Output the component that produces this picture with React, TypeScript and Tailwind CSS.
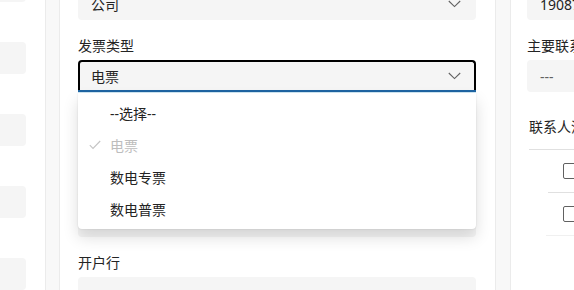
import React from 'react';

function Chevron() {
  return (
    <svg width="13" height="8" viewBox="0 0 13 8" className="shrink-0">
      <path d="M0.8 1 L6.5 6.6 L12.2 1" fill="none" stroke="#616161" strokeWidth="1.1" />
    </svg>
  );
}

function Check() {
  return (
    <svg width="12" height="10" viewBox="0 0 12 10">
      <path d="M0.8 5.2 L4 8.4 L11.2 1" fill="none" stroke="#c4c4c4" strokeWidth="1.1" />
    </svg>
  );
}

function Field({ label, children }: { label: string; children: React.ReactNode }) {
  return (
    <div className="flex flex-col">
      <div className="h-[20px] leading-[20px] text-[14px] text-[#242424]">{label}</div>
      <div className="mt-[4px]">{children}</div>
    </div>
  );
}

function Box({ text, chevron, muted }: { text?: string; chevron?: boolean; muted?: boolean }) {
  return (
    <div className="h-[32px] rounded-[4px] bg-[#f5f5f5] flex items-center justify-between pl-[13px] pr-[15px]">
      <span className={muted ? 'text-[#616161] text-[14px]' : 'text-[#242424] text-[14px]'}>{text}</span>
      {chevron && <Chevron />}
    </div>
  );
}

const options = [
  { label: '--选择--', disabled: false, checked: false },
  { label: '电票', disabled: true, checked: true },
  { label: '数电专票', disabled: false, checked: false },
  { label: '数电普票', disabled: false, checked: false },
];

export default function App() {
  return (
    <div
      className="w-[574px] h-[290px] overflow-hidden bg-white flex"
      style={{ fontFamily: '"Noto Sans", "Noto Sans CJK SC", sans-serif' }}
    >
      {/* left panel (cut off) */}
      <div className="w-[45px] shrink-0 overflow-hidden flex justify-end pr-[19px]">
        <div className="w-[200px] shrink-0 -mt-[12px] flex flex-col gap-[16px]">
          <Box chevron />
          <Field label="">
            <Box />
          </Field>
          <Field label="">
            <Box />
          </Field>
          <Field label="">
            <Box />
          </Field>
          <Field label="">
            <Box />
          </Field>
        </div>
      </div>

      <div className="w-[15px] shrink-0 bg-[#f8f8f8] border-x border-[#ebebeb]" />

      {/* middle panel */}
      <div className="w-[435px] shrink-0 pl-[18px] pr-[19px]">
        <div className="-mt-[12px] flex flex-col gap-[16px]">
          <Box text="公司" chevron />
          <Field label="发票类型">
            <div className="relative">
              <div className="h-[32px] rounded-t-[4px] bg-[#f5f5f5] border-2 border-black border-b-0 flex flex-col">
                <div className="flex-1 flex items-center justify-between pl-[11px] pr-[13px]">
                  <span className="text-[14px] text-[#242424]">电票</span>
                  <Chevron />
                </div>
                <div className="h-[2px] -mx-[2px] bg-[#1f65a3]" />
              </div>
              <div className="h-[1px] bg-[#d6eefa]" />
              <div className="absolute left-0 right-0 top-[33px] z-10 bg-white rounded-b-[4px] py-[4px] shadow-[0_0_2px_rgba(0,0,0,0.12),0_8px_16px_rgba(0,0,0,0.14)]">
                {options.map((o) => (
                  <div key={o.label} className="h-[32px] flex items-center">
                    <div className="w-[32px] flex justify-center pl-[1px]">{o.checked && <Check />}</div>
                    <span className={o.disabled ? 'text-[14px] text-[#bdbdbd]' : 'text-[14px] text-[#242424]'}>
                      {o.label}
                    </span>
                  </div>
                ))}
              </div>
            </div>
          </Field>
          <Field label="开票名称">
            <Box />
          </Field>
          <Field label="税号">
            <Box />
          </Field>
          <Field label="开户行">
            <Box />
          </Field>
        </div>
      </div>

      <div className="w-[16px] shrink-0 bg-[#f8f8f8] border-x border-[#ebebeb]" />

      {/* right panel (cut off) */}
      <div className="flex-1 min-w-0 overflow-hidden pl-[16px]">
        <div className="w-[300px] -mt-[12px] flex flex-col">
          <Box text="19087654321" />
          <div className="mt-[16px]">
            <Field label="主要联系人">
              <Box text="---" muted />
            </Field>
          </div>
          <div className="mt-[25px] pl-[2px] h-[20px] leading-[20px] text-[14px] text-[#242424]">联系人清单</div>
          <div className="mt-[12px] ml-[2px] border-t border-[#e0e0e0]">
            <div className="h-[42px] flex items-center pl-[34px]">
              <div className="w-[16px] h-[16px] rounded-[2px] border border-[#616161] bg-white" />
            </div>
            <div className="ml-[19px] border-t border-[#e0e0e0]">
              <div className="h-[42px] flex items-center pl-[15px]">
                <div className="w-[16px] h-[16px] rounded-[2px] border border-[#616161] bg-white" />
              </div>
            </div>
            <div className="ml-[17px] border-t border-[#f0f0f0]" />
          </div>
        </div>
      </div>
    </div>
  );
}
